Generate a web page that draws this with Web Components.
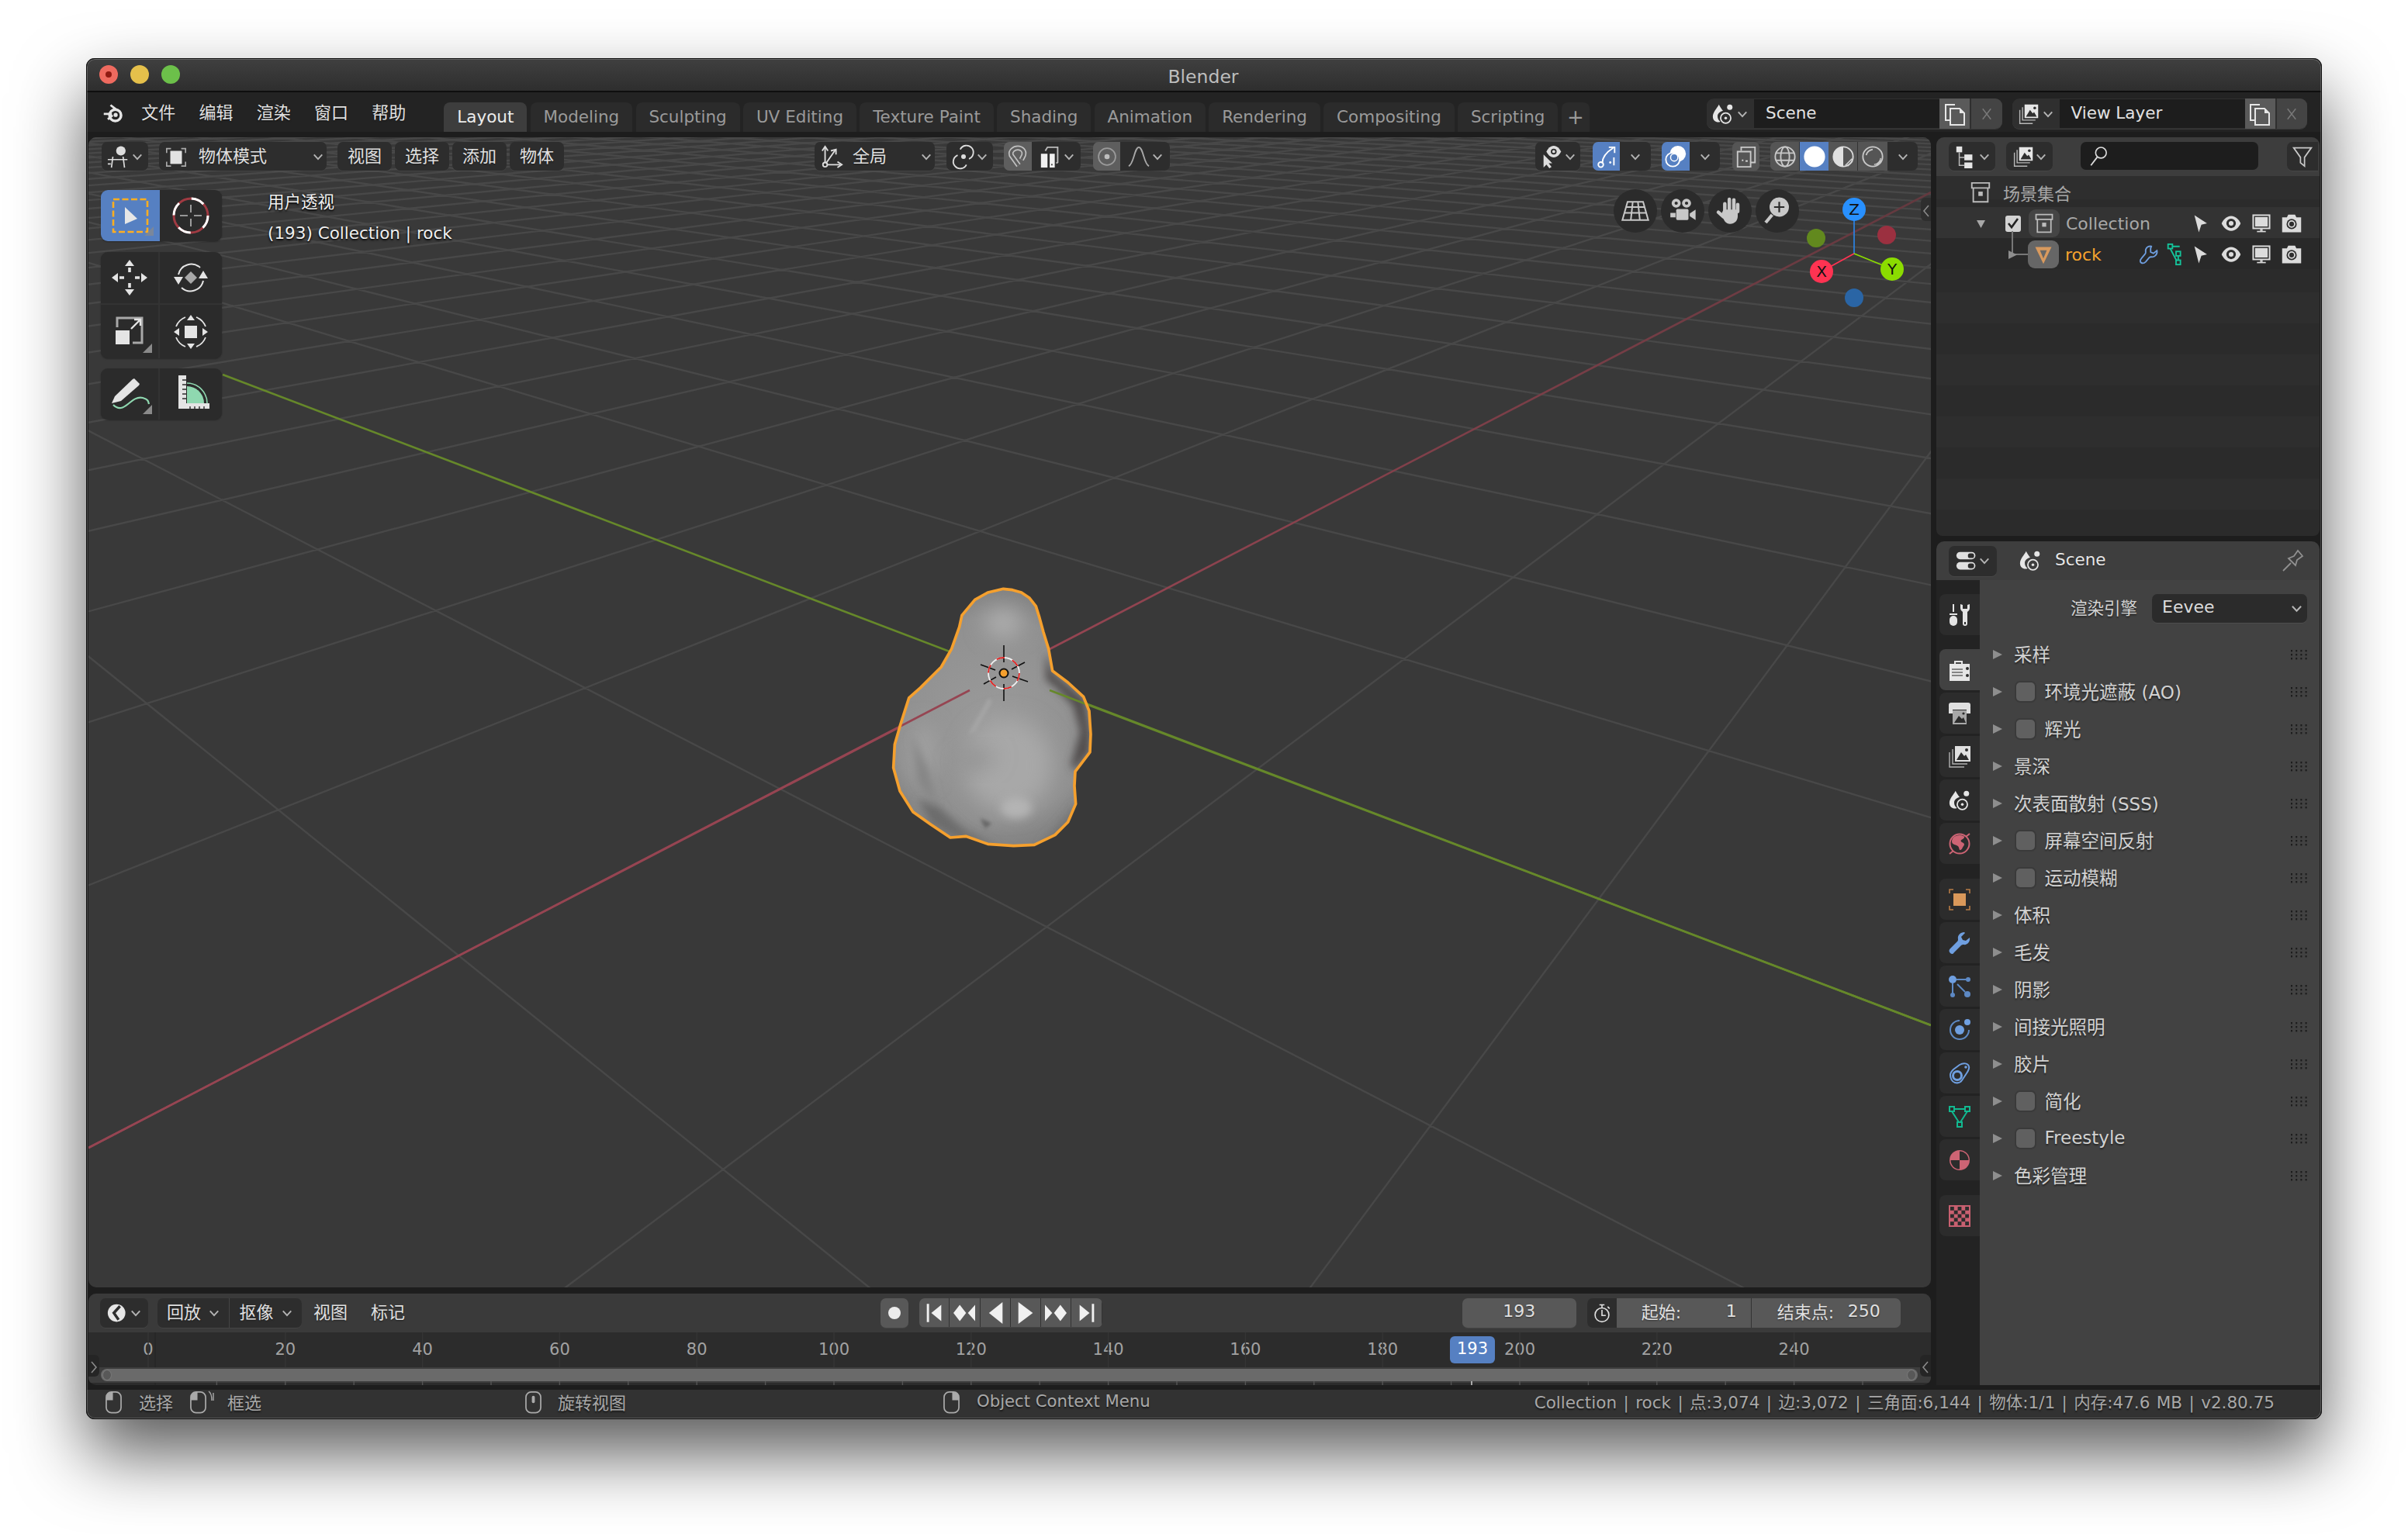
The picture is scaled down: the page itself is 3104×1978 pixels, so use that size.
<!DOCTYPE html>
<html lang="zh">
<head>
<meta charset="utf-8">
<title>Blender</title>
<style>
  html, body { margin: 0; background: #fff; }
  body { padding: 75px 111px 0; height: 1978px; box-sizing: border-box; overflow: hidden;
         font-family: "DejaVu Sans", "Noto Sans CJK SC", sans-serif; }
</style>
</head>
<body>
<bl-window></bl-window>

<script>
const FONT = `"DejaVu Sans", "Noto Sans CJK SC", sans-serif`;

const S = (d, w = 2, c = 'currentColor') => `<path d="${d}" fill="none" stroke="${c}" stroke-width="${w}"/>`;
const F = (d, c = 'currentColor') => `<path d="${d}" fill="${c}"/>`;
const CHECKER = (() => {
  let o = '<rect width="28" height="28" fill="#c86070"/>';
  for (let y = 0; y < 5; y++) for (let x = 0; x < 5; x++)
    if ((x + y) % 2 == 0) o += `<rect x="${2 + x * 4.8}" y="${2 + y * 4.8}" width="4.8" height="4.8" fill="#2c2c2c"/>`;
  return o;
})();

// every icon: [viewBox size, markup]
const ICONS = {
  chev: [16, S('M2 5l6 6.5L14 5', 2.2, '#b4b4b4')],
  logo: [32, `<circle cx="19" cy="19" r="8.5" fill="none" stroke="currentColor" stroke-width="4"/><circle cx="19.5" cy="18.5" r="3" fill="currentColor"/>` + S('M2 17h12M8 25l7-6', 3.2) + S('M12 4l9 7', 3.2)],
  ed3d: [32, `<circle cx="19" cy="8" r="6.5" fill="#ddd"/>` + S('M1 20h27M1 26h4M8 16L6 31M22 16l2 15', 1.8, '#ddd')],
  objmode: [32, S('M9 5H3v6M23 5h6v6M9 29H3v-6M23 29h6v-6', 1.8, '#aaa') + '<rect x="8" y="8" width="16" height="18" fill="#e2e2e2"/>'],
  orient: [32, S('M7 3v24h21M7 27L21 7', 2, '#ddd') + S('M3 8l4-6 4 6M24 23l6 4-6 4M15 8l7-2 0 7', 2, '#ddd') + '<circle cx="7" cy="27" r="3" fill="#2d2d2d" stroke="#ddd" stroke-width="2"/>'],
  pivot: [32, S('M11.5 6a9.5 9.5 0 1 1 12 13', 2, '#ddd') + S('M20 27a9.5 9.5 0 1 1-12-13', 2, '#ddd') + '<circle cx="16" cy="16" r="3.2" fill="#ddd"/>'],
  magnet: [32, S('M17 28L7 14C5 8 11 4 16 4s10 4 8 10l-3 6', 7, '#c0c0c0') + S('M17 28L7 14C5 8 11 4 16 4s10 4 8 10l-3 6', 3.4, '#5e5e5e')],
  snapt: [32, '<rect x="3" y="12" width="9" height="19" fill="#f0f0f0"/><rect x="15" y="12" width="7" height="19" fill="#f0f0f0"/><rect x="17" y="26" width="2" height="2" fill="#444"/>' + S('M9 8l3-5h14v21l-2 1', 2, '#bbb')],
  prop: [32, '<circle cx="16" cy="16" r="12.5" fill="none" stroke="#9a9a9a" stroke-width="2"/><circle cx="16" cy="16" r="3.8" fill="#bdbdbd"/>'],
  falloff: [32, S('M2 29C9 27 10 3 16 3s7 24 14 26', 2, '#a8a8a8')],
  vis: [32, F('M5 13v18l4-4 4 5 3-2-4-5h5z', '#ddd') + F('M19 1c5 0 8 4 10 8-2 4-5 8-10 8s-8-4-10-8c2-4 5-8 10-8z', '#ddd') + '<circle cx="19" cy="9" r="4" fill="#2d2d2d"/><circle cx="19" cy="9" r="2" fill="#ddd"/>'],
  gizmo: [32, S('M10 25C10 15 17 9 25 4', 2, '#fff') + S('M19 3h8v8', 2, '#fff') + '<circle cx="8" cy="27" r="3.5" fill="none" stroke="#fff" stroke-width="2"/><circle cx="21" cy="24" r="1.5" fill="#fff"/><rect x="25" y="17" width="2" height="11" fill="#fff"/>'],
  overlay: [32, '<circle cx="19" cy="12" r="11" fill="#fff"/><circle cx="12" cy="20" r="9.5" fill="#5680c2" stroke="#fff" stroke-width="2"/><circle cx="14" cy="17" r="5" fill="none" stroke="#fff" stroke-width="1.6"/>'],
  xray: [32, S('M9 8V3h19v21h-6', 2, '#c9c9c9') + S('M4 9h18v21H4z', 2, '#c9c9c9') + '<rect x="10" y="20" width="2" height="2" fill="#ddd"/><rect x="15" y="21" width="3" height="2" fill="#ddd"/>'],
  wire: [32, '<circle cx="16" cy="16" r="13.5" fill="none" stroke="#c8c8c8" stroke-width="2"/><ellipse cx="16" cy="16" rx="6" ry="13.5" fill="none" stroke="#c8c8c8" stroke-width="2"/>' + S('M3 11h26M3 21h26', 2, '#c8c8c8')],
  solid: [32, '<circle cx="16" cy="16" r="14.5" fill="#fff"/>'],
  matball: [32, '<circle cx="16" cy="16" r="13.5" fill="none" stroke="#d8d8d8" stroke-width="2"/>' + F('M16 2a14 14 0 0 0 0 28z', '#e0e0e0') + S('M19 28l9-9M22 29l7-7', 1.5, '#d8d8d8')],
  rendered: [32, '<circle cx="16" cy="16" r="13.5" fill="none" stroke="#c8c8c8" stroke-width="2"/>' + S('M7 14c1-4 4-7 9-8', 2, '#c8c8c8') + S('M18 27c5-1 8-4 9-9M21 28l7-7', 1.5, '#c8c8c8')],
  scene: [32, F('M10 2c-3 6-9 11-9 18 0 5 4 8 8 8 1 0 2 0 3-1-3-2-4-5-4-8 0-4 4-7 8-8C14 9 12 6 10 2z', '#e6e6e6') + '<circle cx="26" cy="6" r="4" fill="#e6e6e6"/><circle cx="20" cy="22" r="7.5" fill="none" stroke="#e6e6e6" stroke-width="2"/><circle cx="20" cy="22" r="2" fill="#e6e6e6"/>'],
  layers: [32, '<rect x="10" y="2" width="20" height="20" fill="#e6e6e6"/>' + F('M12 20l6-10 4 5 2-2 4 7z', '#2f2f2f') + '<circle cx="25" cy="7" r="2" fill="#2f2f2f"/>' + S('M7 6v19h19M3 10v20h19', 1.6, '#b8b8b8')],
  copy: [32, S('M9 24H4V4h12', 2, '#e6e6e6') + S('M10 9h12l6 6v15H10z', 2, '#e6e6e6') + F('M22 9l6 6h-6z', '#e6e6e6')],
  x: [32, S('M9 7l14 18M23 7L9 25', 2, '#787878')],
  grid3d: [48, S('M12 10h24l8 28H4zM10 18h28M8 27h32M20 10l-3 28M28 10l3 28', 2.4, '#c8c8c8')],
  camera: [48, '<circle cx="14" cy="12" r="7" fill="#c8c8c8"/><circle cx="30" cy="12" r="7" fill="#c8c8c8"/><circle cx="14" cy="12" r="2.5" fill="#2b2b2b"/><circle cx="30" cy="12" r="2.5" fill="#2b2b2b"/><rect x="14" y="21" width="19" height="17" rx="2" fill="#c8c8c8"/>' + F('M35 28l9-6v16l-9-6zM5 27h8v7H5z', '#c8c8c8')],
  hand: [48, `<g fill="none" stroke="#c8c8c8" stroke-width="5.4" stroke-linecap="round"><path d="M16 26V13M23 23V6M30 23V7M36 25V14M14 33l-8-7"/></g><path d="M11 28l3-6h22v10c0 7-5 12-12 12-6 0-10-4-13-16z" fill="#c8c8c8"/>`],
  zoomin: [48, '<circle cx="27" cy="18" r="15" fill="#c8c8c8"/>' + S('M16 30L6 42', 5, '#c8c8c8') + S('M27 10v16M19 18h16', 2.6, '#2b2b2b')],
  select: [48, `<rect x="2" y="3" width="44" height="42" fill="none" stroke="#ffae20" stroke-width="2.6" stroke-dasharray="8 3.5"/>` + F('M17 13l16 15-16 7z', '#e6e6e6')],
  cursor3d: [48, `<circle cx="24" cy="24" r="22" fill="none" stroke="#a03a42" stroke-width="3"/><circle cx="24" cy="24" r="22" fill="none" stroke="#fff" stroke-width="3" stroke-dasharray="17.3 17.3"/>` + S('M24 10v10M24 28v10M10 24h10M28 24h10', 1.6, '#bbb')],
  move: [48, F('M24 1l6 8H18zM24 47l6-8H18zM1 24l8-6v12zM47 24l-8-6v12z', '#e4e4e4') + F('M22.2 11h3.6v6h-3.6zM22.2 31h3.6v6h-3.6zM11 22.2h6v3.6h-6zM31 22.2h6v3.6h-6z', '#e4e4e4')],
  rotate: [48, F('M24 16l8 8-8 8-8-8z', '#a8a8a8') + S('M8 20a17 17 0 0 1 28-9M40 28a17 17 0 0 1-28 9', 2, '#e4e4e4') + F('M2 23h12L8 33zM34 25h12L40 15z', '#e4e4e4')],
  scale: [48, S('M8 18V6h32v32H28', 3, '#a8a8a8') + '<rect x="6" y="22" width="18" height="18" fill="#e4e4e4"/>' + S('M26 20l11-11M30 8h8v8', 2.4, '#e4e4e4')],
  transform: [48, '<rect x="16" y="16" width="16" height="16" fill="#e4e4e4"/>' + F('M24 2l5 7H19zM24 46l5-7H19zM2 24l7-5v10zM46 24l-7-5v10z', '#e4e4e4') + S('M5 17a21 21 0 0 1 12-12M31 5a21 21 0 0 1 12 12M43 31a21 21 0 0 1-12 12M17 43A21 21 0 0 1 5 31', 1.8, '#e4e4e4')],
  annotate: [48, F('M1 36l4-9L28 5l2-1 7 7-1 2-23 20z', '#e4e4e4') + S('M3 38C10 45 16 42 22 37s12-10 19-8 7 4 8 8', 2.2, '#8fd8b0')],
  measure: [48, F('M8 0h10v42H8zM8 36h40v7H8z', '#e4e4e4') + F('M19 36V14a22 22 0 0 1 22 22z', '#8fd8b0') + S('M13 6h5M13 12h5M13 18h5M13 24h5M13 30h5M23 40v3M29 40v3M35 40v3M41 40v3', 1.4, '#2b2b2b') + S('M19 10a26 26 0 0 1 26 26', 1.6, '#8fd8b0')],
  outl: [32, '<rect x="3" y="2" width="8" height="8" fill="#e6e6e6"/><rect x="14" y="13" width="11" height="8" fill="#e6e6e6"/><rect x="14" y="24" width="11" height="8" fill="#e6e6e6"/>' + S('M7 10v18h7M7 17h7', 1.6, '#bbb')],
  search: [32, '<circle cx="20" cy="11" r="8.5" fill="none" stroke="#ddd" stroke-width="2"/>' + S('M14 18L4 31', 2.2, '#ddd')],
  filter: [32, S('M3 3h26L19 17v13l-6-5v-8z', 2, '#c8c8c8')],
  coll: [32, S('M4 3h24v7H4zM6 11v18h20V11', 2, '#bcbcbc') + '<rect x="13" y="15" width="6" height="6" fill="#bcbcbc"/>'],
  arrowsel: [32, F('M7 3l20 13-9 2-4 12z', '#dcdcdc')],
  eye: [32, F('M16 5c7 0 12 6 14 11-2 5-7 11-14 11S4 21 2 16C4 11 9 5 16 5z', '#dcdcdc') + '<circle cx="16" cy="16" r="7" fill="#2e2e2e"/><circle cx="16" cy="16" r="3.5" fill="#dcdcdc"/>'],
  monitor: [32, '<rect x="3" y="3" width="26" height="21" fill="none" stroke="#dcdcdc" stroke-width="2.4"/><rect x="6" y="6" width="20" height="15" fill="#dcdcdc"/><rect x="14" y="25" width="4" height="3" fill="#dcdcdc"/><rect x="9" y="28" width="14" height="2" fill="#dcdcdc"/>'],
  camshot: [32, F('M2 7h7l2-4h10l2 4h7v22H2z', '#dcdcdc') + '<circle cx="16" cy="17" r="7.5" fill="#2e2e2e"/><circle cx="16" cy="17" r="4.5" fill="none" stroke="#dcdcdc" stroke-width="2"/>'],
  wrenchBlue: [32, S('M20 4c-5-1-9 3-8 8 0 1 0 2-1 3L6 21c-3 3-2 7 2 7 2 0 3-1 4-2l5-6c1-1 2-1 3-1 5 1 9-4 8-9l-5 4-4-2v-5z', 2, '#6f9fe0')],
  meshData: [32, '<rect x="5" y="2" width="6" height="6" fill="none" stroke="#15c39a" stroke-width="2"/><rect x="16" y="24" width="6" height="6" fill="none" stroke="#15c39a" stroke-width="2"/><rect x="16" y="12" width="6" height="6" fill="none" stroke="#15c39a" stroke-width="2"/>' + S('M11 5h10M8 8l9 17M19 18v6', 2, '#15c39a')],
  objTri: [32, F('M4 5h24L16 30zM11 10l5 12 5-12z', '#d99a5e')],
  propsEd: [32, '<rect x="1" y="3" width="28" height="11" rx="5.5" fill="#e0e0e0"/><rect x="1" y="18" width="28" height="11" rx="5.5" fill="#e0e0e0"/><rect x="18" y="5" width="9" height="7" rx="3" fill="#2c2c2c"/><rect x="18" y="20" width="9" height="7" rx="3" fill="#2c2c2c"/>'],
  pin: [28, S('M1 27L11 17M8 11l9 9 2-7 7-5-6-7-5 7z', 1.8, '#909090')],
  tool: [28, '<rect x="5" y="0" width="2" height="10" fill="#e4e4e4"/><rect x="1" y="12" width="10" height="2" fill="#e4e4e4"/><rect x="1" y="15" width="10" height="13" rx="5" fill="#e4e4e4"/>' + F('M15 0v5c0 3 2 4 3 5v15a3 3 0 0 0 6 0V10c1-1 3-2 3-5V0l-3 1v5h-6V1z', '#e4e4e4') + '<rect x="20" y="23" width="2" height="3" fill="#2c2c2c"/>'],
  render: [28, F('M1 6h6V2h11v4h9v22H1z', '#e6e6e6') + S('M4 13h14M4 17h14M4 21h14', 1.6, '#666') + '<circle cx="24" cy="12" r="2" fill="#2c2c2c"/><circle cx="24" cy="21" r="2" fill="#2c2c2c"/><rect x="9" y="4" width="7" height="2" fill="#444"/>'],
  output: [28, '<rect x="0" y="0" width="28" height="9" rx="3" fill="#e0e0e0"/><rect x="0" y="7" width="5" height="7" fill="#e0e0e0"/><rect x="23" y="7" width="5" height="7" fill="#e0e0e0"/><rect x="5" y="10" width="18" height="18" fill="#a8a8a8"/>' + F('M7 26l6-9 4 4 2-2 3 7z', '#2c2c2c') + '<circle cx="19" cy="14" r="1.6" fill="#2c2c2c"/>'],
  vlayer: [28, '<rect x="8" y="0" width="20" height="20" fill="#e0e0e0"/>' + F('M10 18l6-10 4 5 2-2 4 7z', '#2c2c2c') + '<circle cx="23" cy="5" r="2" fill="#2c2c2c"/>' + S('M5 4v19h19M1 8v19h19', 1.4, '#b0b0b0')],
  world: [28, '<circle cx="14" cy="14" r="12.5" fill="none" stroke="#cd6474" stroke-width="2"/>' + F('M7 5c3-2 8-3 12-1 2 1 1 3-1 4-3 1-3 3-1 4 3 1 4 3 2 5-2 3-2 5-5 5-1-3-1-5-4-6-3-1-6-2-6-5 0-2 1-5 3-6z', '#cd6474') + S('M1 27l5-4M22 5l5-4', 2, '#cd6474')],
  object: [28, S('M6 1H1v5M22 1h5v5M6 27H1v-5M22 27h5v-5', 1.6, '#b87c45') + '<rect x="6" y="6" width="16" height="16" fill="#d9985a"/>'],
  modifier: [28, F('M20 0c-5 0-9 4-8 9 0 1 0 2-1 3L2 21c-2 2-2 4 0 6s4 1 5-1l9-9c1-1 2-1 3-1 5 1 9-4 8-9l-5 4-4-1-2-4 5-5z', '#6f9fe0')],
  particles: [28, '<circle cx="5" cy="5" r="5" fill="#6f9fe0"/><circle cx="25" cy="5" r="3" fill="#5d89c4"/><circle cx="5" cy="25" r="3" fill="#5d89c4"/><circle cx="24" cy="24" r="4" fill="#5d89c4"/>' + S('M10 5h13M5 10v13M11 11l10 10', 2, '#5d89c4')],
  physics: [28, S('M14 2a12 12 0 1 0 12 12', 2, '#5d89c4') + '<circle cx="14" cy="14" r="6" fill="#6f9fe0"/><circle cx="24" cy="4" r="4" fill="#6f9fe0"/>'],
  constraint: [28, S('M2 16c0-3 2-5 4-7l8-6c5-3 11-2 12 2 1 3-1 6-3 9l-6 9c-2 3-5 4-9 3-4-1-6-6-6-10z', 2, '#6f9fe0') + '<circle cx="11" cy="17" r="5.5" fill="none" stroke="#6f9fe0" stroke-width="3"/><circle cx="22" cy="6" r="1.8" fill="#6f9fe0"/>'],
  data: [28, S('M1 1h6v6H1zM21 1h6v6h-6zM11 21h6v6h-6zM7 4h14M4 7l9 14M24 7l-9 14', 2, '#12b890')],
  material: [28, '<circle cx="14" cy="14" r="13" fill="#cd6474"/>' + F('M14 14H2.5a11.5 11.5 0 0 0 11.5 11.5zM14 14V2.5a11.5 11.5 0 0 1 11.5 11.5z', '#2c2c2c')],
  texture: [28, CHECKER],
  timeEd: [32, '<circle cx="14" cy="16" r="13" fill="#e6e6e6"/>' + S('M19 6L10 16l7 10', 4, '#2d2d2d')],
  watch: [32, '<circle cx="16" cy="19" r="11" fill="none" stroke="#e0e0e0" stroke-width="2"/>' + S('M16 11v9h6M12 3h8M16 3v5M25 6l3 3', 2, '#e0e0e0')],
  jumpS: [24, F('M4 2h2.5v20H4zM20 3v18L9 12z', '#f0f0f0')],
  keyP: [24, F('M0 12l7-9 7 9-7 9zM24 3v18l-8-9z', '#f0f0f0')],
  playR: [24, F('M20 0v24L5 12z', '#f0f0f0')],
  play: [24, F('M4 0v24l16-12z', '#f0f0f0')],
  keyN: [24, F('M0 3v18l8-9zM17 3l7 9-7 9-7-9z', '#f0f0f0')],
  jumpE: [24, F('M20 2h-2.5v20H20zM4 3v18l11-9z', '#f0f0f0')],
  rec: [24, '<circle cx="12" cy="12" r="8" fill="#ececec"/>'],
  mouseL: [22, `<rect x="1" y="1" width="20" height="28" rx="7" fill="none" stroke="#aaa" stroke-width="1.8"/>` + F('M10 1H8C4 1 1 4 1 8v4h9z', '#aaa')],
  mouseR: [22, `<rect x="1" y="1" width="20" height="28" rx="7" fill="none" stroke="#aaa" stroke-width="1.8"/>` + F('M12 1h2c4 0 7 3 7 7v4h-9z', '#aaa')],
  mouseM: [22, `<rect x="1" y="1" width="20" height="28" rx="7" fill="none" stroke="#aaa" stroke-width="1.8"/><rect x="9" y="6" width="4" height="10" rx="2" fill="#aaa"/>`],
  grip: [21, `<g fill="#1c1c1c">${[0, 1, 2].map(r => [0, 1, 2, 3].map(c => `<rect x="${c * 6.2}" y="${r * 5}" width="2" height="2.4"/>`).join('')).join('')}</g>`],
  corner: [12, F('M12 0v12H0z', '#8a8a8a')],
  tri: [12, F('M0 0l12 6-12 6z', '#8e8e8e')],
  triDown: [12, F('M0 1h12L6 12z', '#a8a8a8')],
  back: [12, S('M9 1L3 8l6 7', 1.6, '#8a8a8a')],
  fwd: [12, S('M3 1l6 7-6 7', 1.6, '#8a8a8a')]
};

const ic = (name, size = 32, style = '') => `<bl-icon name="${name}" size="${size}"${style ? ` style="${style}"` : ''}></bl-icon>`;

class BlIcon extends HTMLElement {
  connectedCallback() {
    if (this.shadowRoot) return;
    const root = this.attachShadow({ mode: 'open' });
    const name = this.getAttribute('name');
    const size = this.getAttribute('size') || 32;
    const [vb, body] = ICONS[name];
    const h = name.startsWith('mouse') ? size * 30 / 22 : name == 'grip' ? size * 13 / 21 : size;
    const vh = name.startsWith('mouse') ? 30 : name == 'grip' ? 13 : vb;
    root.innerHTML = `<style>:host{display:inline-flex;flex:none;color:#e6e6e6}svg{display:block;overflow:visible}</style>
      <svg width="${size}" height="${h}" viewBox="0 0 ${vb} ${vh}">${body}</svg>`;
  }
}
customElements.define('bl-icon', BlIcon);

class BlBtn extends HTMLElement {
  constructor() {
    super();
    this.attachShadow({ mode: 'open' }).innerHTML = `<style>
      :host{display:inline-flex;align-items:center;justify-content:center;box-sizing:border-box;height:37px;flex:none;
        background:#2d2d2d;color:#e0e0e0;border-radius:7px;font-size:22px;white-space:nowrap;
        text-shadow:0 1px 2px rgba(0,0,0,.45);box-shadow:0 1px 0 rgba(255,255,255,.05)}
      ::slotted(span){margin-bottom:6px}
    </style><slot></slot>`;
  }
  connectedCallback() {
    if (this.hasAttribute('w')) this.style.width = this.getAttribute('w') + 'px';
  }
}
customElements.define('bl-btn', BlBtn);

class BlTopbar extends HTMLElement {
  constructor() {
    super();
    const tabs = ['Layout', 'Modeling', 'Sculpting', 'UV Editing', 'Texture Paint', 'Shading', 'Animation', 'Rendering', 'Compositing', 'Scripting'];
    const selector = (icon, label) => `
      <div class="sel">
        <div class="sel-ic">${ic(icon, 28)}${ic('chev', 14, 'margin-left:4px')}</div>
        <div class="sel-in">${label}</div>
        <div class="sel-copy">${ic('copy', 32)}</div>
        <div class="sel-x">${ic('x', 24)}</div>
      </div>`;
    this.attachShadow({ mode: 'open' }).innerHTML = `<style>
      :host{display:flex;height:57px;box-sizing:border-box;background:linear-gradient(#232323 0 51px,#1d1d1d 51px);padding-left:21px;color:#e0e0e0;font-size:22px}
      .logo{margin-top:13px;height:28px}
      nav{display:flex;margin-left:7px;height:47px;align-items:center}
      nav span{width:74.3px;text-align:center;text-shadow:0 1px 2px rgba(0,0,0,.5)}
      .tabs{display:flex;gap:4.5px;margin-left:34px;margin-top:13px;height:38px}
      .tab{padding:0 16.8px;height:38px;line-height:38px;border-radius:8px 8px 0 0;background:#2b2b2b;color:#9a9a9a;font-size:21.5px;white-space:nowrap}
      .tab.on{background:#3d3d3d;color:#ececec}
      .tab.add{padding:0;width:36px;text-align:center;font-size:26px}
      .right{display:flex;gap:13px;margin-left:auto;margin-top:8px;margin-right:19px;height:39px}
      .sel{display:flex;width:380.5px;height:39px;background:#2f2f2f;border-radius:9px;overflow:hidden;box-shadow:0 1px 0 #3a3a3a}
      .sel-ic{width:61px;display:flex;align-items:center;padding-left:7px;box-sizing:border-box}
      .sel-in{flex:1;background:#1d1d1d;padding-left:15px;line-height:36px;margin:1px 0;font-size:21.5px;color:#e2e2e2}
      .sel-copy{width:39px;background:#5a5a5a;display:flex;align-items:center;justify-content:center}
      .sel-x{width:39.5px;margin-left:2px;background:#444;display:flex;align-items:center;justify-content:center}
    </style>
    <div class="logo">${ic('logo', 28)}</div>
    <nav><span>文件</span><span>编辑</span><span>渲染</span><span>窗口</span><span>帮助</span></nav>
    <div class="tabs">
      ${tabs.map((t, i) => `<div class="tab${i == 0 ? ' on' : ''}">${t}</div>`).join('')}
      <div class="tab add">+</div>
    </div>
    <div class="right">${selector('scene', 'Scene')}${selector('layers', 'View Layer')}</div>`;
  }
}
customElements.define('bl-topbar', BlTopbar);

class BlViewport extends HTMLElement {
  constructor() {
    super();
    // floor plane: origin and two vanishing points measured off the axes
    const O = [1294, 868], VX = [2894, 37], VY = [-887, 37], A = .1525, B = .13;
    const P = (u, w) => {
      const d = 1 + A * u + B * w;
      return [(O[0] + A * u * VX[0] + B * w * VY[0]) / d, (O[1] + A * u * VX[1] + B * w * VY[1]) / d];
    };
    let grid = '';
    const line = (a, b) => `M${a[0].toFixed(1)} ${a[1].toFixed(1)}L${b[0].toFixed(1)} ${b[1].toFixed(1)}`;
    for (let u = -5; u <= 70; u++) if (u != 0) grid += line(P(u, (.04 - 1 - A * u) / B), VY);
    for (let w = -7; w <= 70; w++) if (w != 0) grid += line(P((.04 - 1 - B * w) / A, w), VX);

    const rock = 'M580 58L615 62 650 72 680 92 706 125 720 170 735 225 755 290 770 375 830 420 890 475 912 530 918 620 915 690 858 765 855 820 860 890 830 960 780 1010 700 1048 620 1052 520 1045 435 1015 375 1020 300 970 230 920 180 840 155 750 160 660 180 590 215 480 260 440 340 360 380 290 410 205 420 160 470 100 520 72Z';

    const tool = (name, size, corner, on) => `<div class="cell${on ? ' on' : ''}">${ic(name, size)}${corner ? ic('corner', 12, `position:absolute;right:8px;bottom:7px;${on ? 'opacity:.7' : ''}`) : ''}</div>`;

    this.attachShadow({ mode: 'open' }).innerHTML = `<style>
      :host{display:block;position:relative;height:1483px;background:#393939;border-radius:10px;overflow:hidden;color:#e0e0e0;font-size:22px}
      svg.scene{position:absolute;left:0;top:0}
      .hdr{position:absolute;left:17px;right:17px;top:6px;display:flex;align-items:flex-start}
      .grp{display:flex;border-radius:7px;overflow:hidden;flex:none}
      .grp bl-btn{border-radius:0}
      .tools{position:absolute;left:16px;top:68px;width:156px;display:flex;flex-direction:column}
      .tg{display:grid;grid-template-columns:76px 80px;background:#2b2b2b;border-radius:9px;overflow:hidden;box-shadow:0 1px 2px rgba(0,0,0,.3)}
      .cell{height:66px;display:flex;align-items:center;justify-content:center;position:relative;border-right:2px solid #333;box-sizing:border-box}
      .cell:nth-child(2n){border-right:0}
      .cell.on{background:#5680c2;border-right:0}
      .tg .cell:nth-child(n+3){border-top:2px solid #333;height:71px}
      .info{position:absolute;left:231px;top:64px;line-height:40px;color:#f0f0f0;text-shadow:0 1px 2px #000,0 2px 3px rgba(0,0,0,.6);font-size:21.5px}
      .navs{position:absolute;left:1966px;top:67px;display:flex;gap:5px}
      .nav{width:56px;height:56px;border-radius:50%;background:#2b2b2b;display:flex;align-items:center;justify-content:center}
      .fold{position:absolute;right:0;top:78px;width:13px;height:30px;background:#2e2e2e;border-radius:6px 0 0 6px;display:flex;align-items:center;justify-content:center}
    </style>
    <svg class="scene" width="2375" height="1483" viewBox="114 177 2375 1483">
      <defs>
        <clipPath id="rc"><path d="${rock}"/></clipPath>
        <filter id="b1" x="-60%" y="-60%" width="220%" height="220%"><feGaussianBlur stdDeviation="42"/></filter>
        <filter id="b2" x="-40%" y="-40%" width="180%" height="180%"><feGaussianBlur stdDeviation="16"/></filter>
        <filter id="b3" x="-40%" y="-40%" width="180%" height="180%"><feGaussianBlur stdDeviation="6"/></filter>
        <linearGradient id="rfade" gradientUnits="userSpaceOnUse" x1="1353" y1="837" x2="2488" y2="248"><stop offset="0" stop-color="#964552"/><stop offset="1" stop-color="#63393f"/></linearGradient>
        <radialGradient id="rbase" gradientUnits="userSpaceOnUse" cx="540" cy="560" r="560"><stop offset="0" stop-color="#9a9a9a"/><stop offset=".7" stop-color="#909090"/><stop offset="1" stop-color="#7a7a7a"/></radialGradient>
      </defs>
      <path d="${grid}" fill="none" stroke="#484848" stroke-width="2.4"/>
      <path d="M287 483L2489 1322" stroke="#66882a" stroke-width="2.6"/>
      <path d="M1353 837L2489 248" stroke="url(#rfade)" stroke-width="2.6"/>
      <path d="M114 1480L1294 868" stroke="#964552" stroke-width="2.6"/>
      <g transform="translate(1100 740) scale(.3333)">
        <path d="${rock}" fill="url(#rbase)"/>
        <g clip-path="url(#rc)">
          <ellipse cx="580" cy="190" rx="70" ry="55" fill="#b0b0b0" filter="url(#b1)"/>
          <ellipse cx="600" cy="740" rx="170" ry="180" fill="#a8a8a8" filter="url(#b1)"/>
          <ellipse cx="270" cy="690" rx="50" ry="110" fill="#a2a2a2" filter="url(#b1)"/>
          <ellipse cx="630" cy="905" rx="60" ry="40" fill="#b4b4b4" filter="url(#b2)"/>
          <path d="M525 480L445 620 470 610 535 495Z" fill="#a6a6a6" filter="url(#b3)"/>
          <path d="M380 730L480 760 560 700 480 680Z" fill="#8c8c8c" filter="url(#b1)"/>
          <path d="M745 300L775 385 895 485 918 620 914 690 858 760 842 740 878 610 850 510 785 440 745 410Z" fill="#4f4c4c" filter="url(#b2)"/>
          <path d="M300 970L390 1020 560 1055 430 990 330 900 250 870Z" fill="#6c6c6c" filter="url(#b2)"/>
          <path d="M720 1055L860 890 880 1000 770 1070Z" fill="#747474" filter="url(#b2)"/>
          <path d="M490 945L535 965 510 985Z" fill="#666" filter="url(#b3)"/>
          <path d="M225 620L250 800 320 900 290 760Z" fill="#848484" filter="url(#b2)"/>
        </g>
      </g>
      <path d="M114 1480L1250 890" stroke="#964552" stroke-width="2.6"/>
      <path d="M1353 890L2489 1322" stroke="#66882a" stroke-width="2.6"/>
      <g transform="translate(1100 740) scale(.3333)">
        <path d="${rock}" fill="none" stroke="#f5a02e" stroke-width="11" stroke-linejoin="round"/>
      </g>
      <g>
        <path d="M1294 832v22M1294 882v22M1264 857l19 7M1305 872l20 7M1268 882l16-9M1304 863l17-9" stroke="#111" stroke-width="1.6" fill="none"/>
        <circle cx="1294" cy="868" r="20" fill="none" stroke="#f0f0f0" stroke-width="1.8"/>
        <circle cx="1294" cy="868" r="20" fill="none" stroke="#e02020" stroke-width="1.8" stroke-dasharray="10.5 10.5"/>
        <circle cx="1294" cy="868" r="5.5" fill="#f5a02e" stroke="#111" stroke-width="2"/>
      </g>
      <g>
        <path d="M2390 270v57" stroke="#2c7fdc" stroke-width="1.8"/>
        <path d="M2390 327l-42 23" stroke="#ff3352" stroke-width="1.8"/>
        <path d="M2390 327l49 20" stroke="#8bdc00" stroke-width="1.8"/>
        <circle cx="2432" cy="303" r="12" fill="#9b3040"/>
        <circle cx="2341" cy="307" r="12" fill="#62891e"/>
        <circle cx="2390" cy="384" r="12" fill="#2a65a5"/>
        <circle cx="2390" cy="270" r="15" fill="#2890ff"/>
        <circle cx="2348" cy="350" r="15" fill="#ff3352"/>
        <circle cx="2439" cy="347" r="15" fill="#8bdc00"/>
        <g font-family="DejaVu Sans" font-size="20" text-anchor="middle" fill="#111">
          <text x="2390" y="277">Z</text><text x="2348" y="357">X</text><text x="2439" y="354">Y</text>
        </g>
      </g>
    </svg>
    <div class="hdr">
      <bl-btn w="60">${ic('ed3d', 30)}${ic('chev', 14, 'margin-left:2px')}</bl-btn>
      <bl-btn w="216" style="margin-left:14px;justify-content:flex-start;padding-left:7px">${ic('objmode', 30)}<span style="margin-left:14px">物体模式</span>${ic('chev', 14, 'margin-left:auto;margin-right:4px')}</bl-btn>
      <bl-btn w="70" style="margin-left:14px"><span>视图</span></bl-btn>
      <bl-btn w="70" style="margin-left:4px"><span>选择</span></bl-btn>
      <bl-btn w="70" style="margin-left:4px"><span>添加</span></bl-btn>
      <bl-btn w="70" style="margin-left:4px"><span>物体</span></bl-btn>
      <bl-btn w="155" style="margin-left:323px;justify-content:flex-start;padding-left:7px">${ic('orient', 30)}<span style="margin-left:12px">全局</span>${ic('chev', 14, 'margin-left:auto;margin-right:4px')}</bl-btn>
      <bl-btn w="60" style="margin-left:15px">${ic('pivot', 30)}${ic('chev', 14, 'margin-left:2px')}</bl-btn>
      <div class="grp" style="margin-left:14px">
        <bl-btn w="36" style="background:#5e5e5e">${ic('magnet', 30)}</bl-btn>
        <bl-btn w="63">${ic('snapt', 30)}${ic('chev', 14, 'margin-left:2px')}</bl-btn>
      </div>
      <div class="grp" style="margin-left:16px">
        <bl-btn w="35" style="background:#5e5e5e">${ic('prop', 28)}</bl-btn>
        <bl-btn w="64">${ic('falloff', 30)}${ic('chev', 14, 'margin-left:2px')}</bl-btn>
      </div>
      <bl-btn w="58" style="margin-left:471px">${ic('vis', 30)}${ic('chev', 14, 'margin-left:2px')}</bl-btn>
      <div class="grp" style="margin-left:16px">
        <bl-btn w="35" style="background:#5680c2">${ic('gizmo', 30)}</bl-btn>
        <bl-btn w="40">${ic('chev', 14)}</bl-btn>
      </div>
      <div class="grp" style="margin-left:14px">
        <bl-btn w="36" style="background:#5680c2">${ic('overlay', 30)}</bl-btn>
        <bl-btn w="39">${ic('chev', 14)}</bl-btn>
      </div>
      <bl-btn w="35" style="margin-left:16px;background:#555">${ic('xray', 30)}</bl-btn>
      <div class="grp" style="margin-left:14px">
        <bl-btn w="38" style="background:#555;border-right:1px solid #333">${ic('wire', 30)}</bl-btn>
        <bl-btn w="37" style="background:#5680c2">${ic('solid', 30)}</bl-btn>
        <bl-btn w="38" style="background:#555;border-right:1px solid #333">${ic('matball', 30)}</bl-btn>
        <bl-btn w="38" style="background:#555">${ic('rendered', 30)}</bl-btn>
        <bl-btn w="39">${ic('chev', 14)}</bl-btn>
      </div>
    </div>
    <div class="tools">
      <div class="tg">${tool('select', 48, 1, 1)}${tool('cursor3d', 48)}</div>
      <div class="tg" style="margin-top:14px">${tool('move', 48)}${tool('rotate', 48)}${tool('scale', 48, 1)}${tool('transform', 48)}</div>
      <div class="tg" style="margin-top:13px">${tool('annotate', 48, 1)}${tool('measure', 48)}</div>
    </div>
    <div class="info"><div>用户透视</div><div>(193) Collection | rock</div></div>
    <div class="navs">
      <div class="nav">${ic('grid3d', 40)}</div><div class="nav">${ic('camera', 40)}</div>
      <div class="nav">${ic('hand', 40)}</div><div class="nav">${ic('zoomin', 40)}</div>
    </div>
    <div class="fold">${ic('back', 12)}</div>`;
  }
}
customElements.define('bl-viewport', BlViewport);

class BlTimeline extends HTMLElement {
  constructor() {
    super();
    const nums = [];
    for (let n = 0; n <= 240; n += 20) nums.push(n);
    let ticks = '';
    for (let f = 10; f <= 250; f += 10) ticks += `M${191 - 114 + f * 8.84} 63v5`;
    let faint = '';
    for (let f = 0; f <= 240; f += 20) faint += `M${191 - 114 + f * 8.84} 0v47`;
    const seg = n => `<bl-btn w="39.3" style="border-radius:0;background:#585858;border-right:1px solid #333">${ic(n, 28)}</bl-btn>`;
    this.attachShadow({ mode: 'open' }).innerHTML = `<style>
      :host{display:block;position:relative;height:118px;border-radius:10px 10px 10px 10px;overflow:hidden;background:#2c2c2c;font-size:22px;color:#e0e0e0}
      .hdr{height:50px;background:#3a3a3a;display:flex;align-items:center;padding-left:15px;box-sizing:border-box}
      .pair{display:flex;margin-left:12px;border-radius:7px;overflow:hidden;box-shadow:0 1px 0 #444}
      .pair bl-btn{border-radius:0}
      .plain{width:74px;text-align:center;text-shadow:0 1px 2px rgba(0,0,0,.5);padding-bottom:7px}
      .grp{display:flex;border-radius:7px;overflow:hidden}
      .num{display:grid;grid-template-columns:repeat(13,176.8px);margin-left:-11.4px;height:47px;box-sizing:border-box;padding-bottom:3px;align-items:center;color:#a2a2a2;font-size:21px;text-align:center}
      .cur{position:absolute;left:1755px;top:55px;width:58px;height:35px;background:#5680c2;border-radius:6px;color:#fff;text-align:center;line-height:33px;font-size:21px}
      svg{position:absolute;left:0;top:50px}
      .bar{position:absolute;left:16px;right:17px;top:97px;height:16px;background:#6a6a6a;border-radius:8px}
      .bar i{position:absolute;top:1px;width:12px;height:14px;border-radius:50%;background:#585858;border:1px solid #777;box-sizing:border-box}
      .track{position:absolute;left:0;right:0;top:95px;height:20px;background:#3d3d3d}
      .fold{position:absolute;top:79px;width:14px;height:28px;background:#252525;display:flex;align-items:center;justify-content:center}
      .frame span:first-child{flex:1}
    </style>
    <div class="hdr">
      <bl-btn w="62" style="background:#2d2d2d;height:38px">${ic('timeEd', 28)}${ic('chev', 14, 'margin-left:2px')}</bl-btn>
      <div class="pair">
        <bl-btn w="92" style="height:38px"><span>回放</span>${ic('chev', 14, 'margin-left:10px')}</bl-btn>
        <bl-btn w="94" style="height:38px;border-left:1px solid #454545"><span>抠像</span>${ic('chev', 14, 'margin-left:10px')}</bl-btn>
      </div>
      <div class="plain">视图</div>
      <div class="plain">标记</div>
      <bl-btn w="36" style="margin-left:598px;height:38px;background:#585858">${ic('rec', 24)}</bl-btn>
      <div class="grp" style="margin-left:14px;height:38px">
        ${seg('jumpS')}${seg('keyP')}${seg('playR')}${seg('play')}${seg('keyN')}${seg('jumpE')}
      </div>
      <bl-btn w="147" style="margin-left:464px;height:38px;background:#585858"><span>193</span></bl-btn>
      <div class="grp" style="margin-left:14px;height:38px">
        <bl-btn w="38" style="height:38px;border-radius:0">${ic('watch', 26)}</bl-btn>
        <bl-btn class="frame" w="174" style="height:38px;border-radius:0;background:#585858;justify-content:flex-start;padding:0 18px 0 32px;border-right:1px solid #333"><span>起始:</span><span>1</span></bl-btn>
        <bl-btn class="frame" w="192" style="height:38px;border-radius:0;background:#585858;justify-content:flex-start;padding:0 26px 0 33px"><span>结束点:</span><span>250</span></bl-btn>
      </div>
    </div>
    <div class="num">${nums.map(n => `<div>${n}</div>`).join('')}</div>
    <svg width="2376" height="68"><path d="${faint}" stroke="#343434" stroke-width="1.5"/><path d="M86 0v68" stroke="#262626" stroke-width="1.5"/></svg>
    <div class="track"></div>
    <div class="bar"><i style="left:2px"></i><i style="right:2px"></i></div>
    <svg width="2376" height="68" style="pointer-events:none"><path d="${ticks}" stroke="#555" stroke-width="1.4"/><path d="M1783 63v5" stroke="#ddd" stroke-width="1.4"/></svg>
    <div class="cur">193</div>
    <div class="fold" style="left:0;border-radius:0 6px 6px 0">${ic('fwd', 12)}</div>
    <div class="fold" style="right:0;border-radius:6px 0 0 6px">${ic('back', 12)}</div>`;
  }
}
customElements.define('bl-timeline', BlTimeline);

class BlOutliner extends HTMLElement {
  constructor() {
    super();
    const restrict = `${ic('eye', 28, 'margin-left:13px')}${ic('monitor', 26, 'margin-left:12px')}${ic('camshot', 28, 'margin-left:12px')}`;
    this.attachShadow({ mode: 'open' }).innerHTML = `<style>
      :host{display:block;height:514px;border-radius:10px 10px 8px 8px;overflow:hidden;background:repeating-linear-gradient(#2b2b2b 0 40px,#2e2e2e 40px 80px);font-size:22px;color:#a8a8a8}
      .hdr{height:50px;background:#3d3d3d;display:flex;padding:6px 0 0 16px;box-sizing:border-box;align-items:flex-start}
      .search{margin-left:36px;width:229px;height:36px;background:#1d1d1d;border-radius:7px;display:flex;align-items:center;padding-left:10px;box-sizing:border-box}
      .row{height:40px;display:flex;align-items:center;padding:2px 22px 0 0;box-sizing:border-box;position:relative}
      .row.c{background:#333}
      .row.r{background:#292929}
      .ib{width:40px;height:36px;border-radius:9px;display:flex;align-items:center;justify-content:center;flex:none}
      .cb{width:20px;height:21px;border-radius:3px;background:#d2d2d2;display:flex;align-items:center;justify-content:center;flex:none}
      .tree{position:absolute;left:97px;top:-9px;width:21px;height:31px;border-left:2px solid #777;border-bottom:2px solid #777;box-sizing:border-box}
    </style>
    <div class="hdr">
      <bl-btn w="60">${ic('outl', 30)}${ic('chev', 14, 'margin-left:2px')}</bl-btn>
      <bl-btn w="60" style="margin-left:14px">${ic('layers', 28)}${ic('chev', 14, 'margin-left:2px')}</bl-btn>
      <div class="search">${ic('search', 26)}</div>
      <bl-btn w="40" style="margin-left:37px;border-radius:7px 0 0 7px">${ic('filter', 28)}</bl-btn>
    </div>
    <div class="row" style="padding-left:42px">${ic('coll', 30)}<span style="margin-left:14px">场景集合</span></div>
    <div class="row c" style="padding-left:52px">
      ${ic('triDown', 11)}
      <div class="cb" style="margin-left:26px"><svg width="16" height="16" viewBox="0 0 16 16"><path d="M2 8l4 5 8-11" fill="none" stroke="#222" stroke-width="2.6"/></svg></div>
      <div class="ib" style="margin-left:10px;background:#454545">${ic('coll', 28)}</div>
      <span style="margin-left:8px">Collection</span>${ic('arrowsel', 26, 'margin-left:auto')}${restrict}
    </div>
    <div class="row r" style="padding-left:93px">
      <div class="tree"></div>
      ${ic('tri', 11, 'position:relative')}
      <div class="ib" style="margin-left:14px;background:#666;position:relative">${ic('objTri', 28)}</div>
      <span style="margin-left:8px;color:#f6a32e">rock</span>
      ${ic('wrenchBlue', 29, 'margin-left:auto')}${ic('meshData', 30, 'margin-left:6px')}${ic('arrowsel', 26, 'margin-left:3px')}${restrict}
    </div>`;
  }
}
customElements.define('bl-outliner', BlOutliner);

class BlProperties extends HTMLElement {
  constructor() {
    super();
    const tabs = [['tool', 18], ['render', 18, 1], ['output', 3], ['vlayer', 3], ['scene', 3], ['world', 3],
      ['object', 19], ['modifier', 3], ['particles', 3], ['physics', 3], ['constraint', 3], ['data', 3], ['material', 3], ['texture', 19]];
    const rows = [['采样'], ['环境光遮蔽 <i>(AO)</i>', 1], ['辉光', 1], ['景深'], ['次表面散射 <i>(SSS)</i>'], ['屏幕空间反射', 1], ['运动模糊', 1],
      ['体积'], ['毛发'], ['阴影'], ['间接光照明'], ['胶片'], ['简化', 1], ['<i>Freestyle</i>', 1], ['色彩管理']];
    this.attachShadow({ mode: 'open' }).innerHTML = `<style>
      :host{display:flex;flex-direction:column;height:1088px;border-radius:10px 10px 0 0;overflow:hidden;font-size:23.5px;color:#d2d2d2}
      .hdr{height:50px;background:#3e3e3e;display:flex;align-items:center;padding:0 20px 0 16px;box-sizing:border-box;font-size:21.5px;color:#e6e6e6}
      .body{flex:1;display:flex}
      .side{width:56px;background:#232323;padding-left:4px;box-sizing:border-box;display:flex;flex-direction:column}
      .tab{height:53px;background:#2c2c2c;border-radius:8px 0 0 8px;display:flex;align-items:center;padding-left:12px;box-sizing:border-box;flex:none}
      .tab.on{background:#424242}
      .main{flex:1;background:#424242;padding:18px 16px 0 17px;text-shadow:0 2px 2px rgba(0,0,0,.45)}
      .eng{display:flex;justify-content:flex-end;align-items:center;height:37px;margin-bottom:17px;font-size:21.5px}
      .drop{width:200px;height:37px;margin-left:19px;background:#2b2b2b;border-radius:7px;display:flex;align-items:center;padding:0 6px 0 13px;box-sizing:border-box;box-shadow:0 1px 0 #4d4d4d;text-shadow:none;color:#dcdcdc;font-size:22px}
      .up{margin-bottom:3px}
      .eng .up{margin-bottom:5px}
      .row{height:48px;display:flex;align-items:center;white-space:nowrap}
      .row i{font-style:normal;font-size:23px}
      .cb{width:24px;height:24px;background:#606060;border-radius:5px;margin-left:17.5px;box-shadow:0 0 0 2px #3a3a3a;flex:none}
    </style>
    <div class="hdr">
      <bl-btn w="62" style="height:39px">${ic('propsEd', 28)}${ic('chev', 14, 'margin-left:2px')}</bl-btn>
      ${ic('scene', 28, 'margin-left:29px')}
      <span class="up" style="margin-left:18px;text-shadow:0 1px 2px rgba(0,0,0,.45)">Scene</span>
      ${ic('pin', 28, 'margin-left:auto')}
    </div>
    <div class="body">
      <div class="side">
        ${tabs.map(([n, m, on]) => `<div class="tab${on ? ' on' : ''}" style="margin-top:${m}px">${ic(n, 28)}</div>`).join('')}
      </div>
      <div class="main">
        <div class="eng"><span class="up">渲染引擎</span><div class="drop"><span class="up">Eevee</span>${ic('chev', 15, 'margin-left:auto')}</div></div>
        ${rows.map(([t, c]) => `<div class="row">${ic('tri', 12)}${c ? '<div class="cb"></div>' : ''}<span class="up" style="margin-left:${c ? 13 : 15}px">${t}</span>${ic('grip', 21, 'margin-left:auto')}</div>`).join('')}
      </div>
    </div>`;
  }
}
customElements.define('bl-properties', BlProperties);

class BlStatusbar extends HTMLElement {
  constructor() {
    super();
    this.attachShadow({ mode: 'open' }).innerHTML = `<style>
      :host{display:flex;align-items:center;height:38px;box-sizing:border-box;background:#323232;color:#a8a8a8;font-size:22px;padding:0 61px 5px 25px;white-space:nowrap;text-shadow:0 2px 2px rgba(0,0,0,.55)}
      span{margin-bottom:4px}
      .t{margin-left:22px}
      .r{margin-left:auto;font-size:21.5px;word-spacing:1.6px}
    </style>
    ${ic('mouseL', 21)}<span class="t">选择</span>
    ${ic('mouseL', 21, 'margin-left:22px')}<svg width="8" height="24" viewBox="0 0 8 24" style="margin:-8px 0 0 2px"><path d="M1 1c3 2 4 6 4 12M7 3v10" fill="none" stroke="#aaa" stroke-width="1.4"/></svg><span class="t" style="margin-left:17px">框选</span>
    ${ic('mouseM', 21, 'margin-left:340px')}<span class="t" style="margin-left:21px">旋转视图</span>
    ${ic('mouseR', 21, 'margin-left:409px')}<span class="t" style="font-size:21.2px">Object Context Menu</span>
    <span class="r">Collection | rock | 点:3,074 | 边:3,072 | 三角面:6,144 | 物体:1/1 | 内存:47.6 MB | v2.80.75</span>`;
  }
}
customElements.define('bl-statusbar', BlStatusbar);

class BlWindow extends HTMLElement {
  constructor() {
    super();
    this.attachShadow({ mode: 'open' }).innerHTML = `<style>
      :host{display:flex;flex-direction:column;width:2882px;height:1755px;border-radius:11px;overflow:hidden;background:#1d1d1d;position:relative;
        font-family:${FONT};box-shadow:0 44px 90px rgba(0,0,0,.65)}
      :host::after{content:"";position:absolute;inset:0;border:1px solid #0e0e0e;border-radius:11px;box-shadow:inset 0 0 0 1px rgba(255,255,255,.2);pointer-events:none}
      .title{height:44px;flex:none;box-sizing:border-box;background:linear-gradient(#404040,#2e2e2e);border-bottom:2px solid #0e0e0e;display:flex;align-items:center;position:relative;padding-left:17px;gap:16px}
      .title b{font-weight:normal;font-size:23.5px;color:#bdbdbd;position:absolute;left:0;right:2px;text-align:center;padding-top:5px}
      .light{width:24px;height:24px;border-radius:50%;position:relative;flex:none}
      .light.r::after{content:"";position:absolute;left:8px;top:8px;width:8px;height:8px;border-radius:50%;background:#8f1a12}
      .main{flex:1;display:grid;grid-template-columns:2375px 494px;column-gap:7px;padding:1px 3px 0;height:1610px;align-content:start}
      .col{display:flex;flex-direction:column}
    </style>
    <div class="title">
      <span class="light r" style="background:#ee6a5f"></span>
      <span class="light" style="background:#e5c04b"></span>
      <span class="light" style="background:#6cc04a"></span>
      <b>Blender</b>
    </div>
    <bl-topbar></bl-topbar>
    <div class="main">
      <div class="col"><bl-viewport></bl-viewport><bl-timeline style="margin-top:8px"></bl-timeline></div>
      <div class="col"><bl-outliner></bl-outliner><bl-properties style="margin-top:7px"></bl-properties></div>
    </div>
    <bl-statusbar></bl-statusbar>`;
  }
}
customElements.define('bl-window', BlWindow);
</script>
</body>
</html>
